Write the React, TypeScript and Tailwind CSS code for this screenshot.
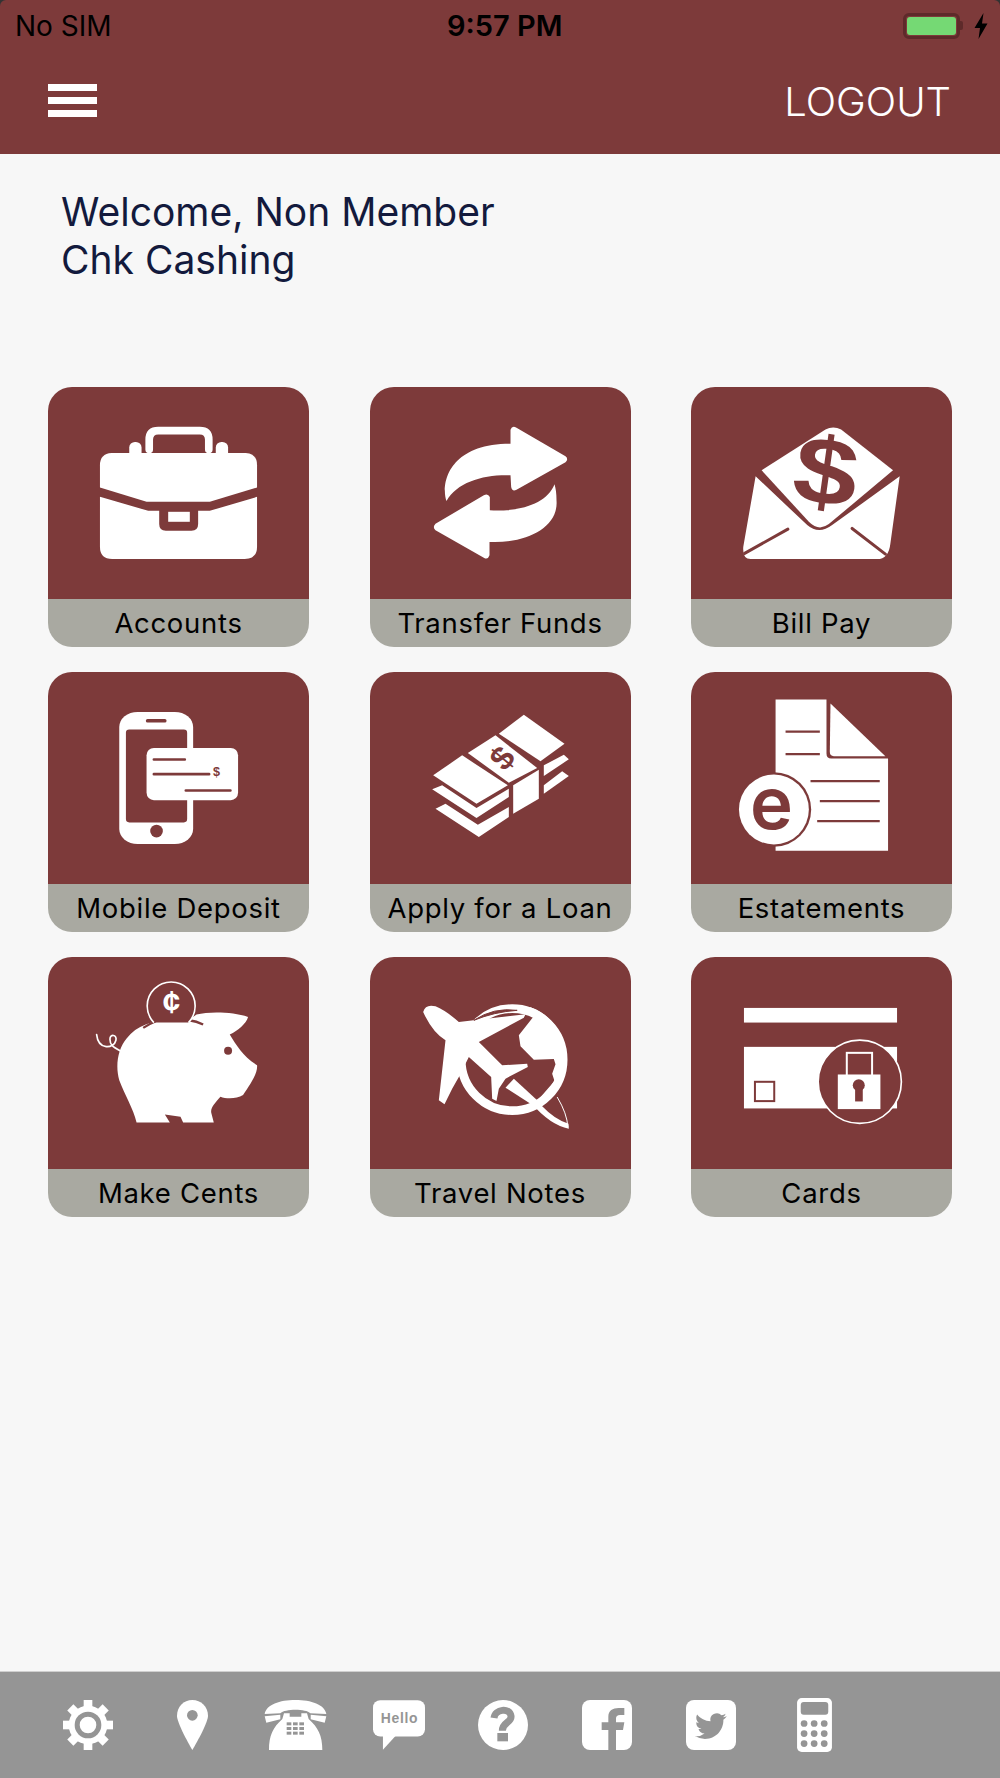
import type { ReactNode } from "react"

const MAROON = "#7d3a3a"
const GREY = "#959595"

function Briefcase() {
  return (
    <svg viewBox="55 50 782 637" className="w-full h-full" fill="#fff">
      <path d="M210 352L210 285Q210 250 245 248L648 248Q682 250 682 285L682 352L540 395L350 395Z" />
      <rect x="298" y="215" width="37" height="50" rx="17" />
      <rect x="558" y="215" width="37" height="50" rx="17" />
      <path d="M358 238L358 208Q358 181 385 181L510 181Q537 181 537 208L537 238" fill="none" stroke="#fff" strokeWidth="23" strokeLinecap="round" />
      <path d="M210 380L355 422L388 422L388 462Q388 482 408 482L485 482Q505 482 505 462L505 422L540 422L682 380L682 530Q682 567 645 567L247 567Q210 567 210 530Z" />
      <rect x="415" y="425" width="65" height="30" />
    </svg>
  )
}

function Transfer() {
  return (
    <svg viewBox="0 0 780 636" className="w-full h-full" fill="#fff">
      <path d="M420 170L420 128Q425 114 438 122L585 208Q595 216 585 226L438 308Q425 315 422 300L420 265C340 262 260 285 228 342C212 300 225 170 420 170Z" />
      <path d="M358 370L358 330Q352 318 340 325L195 410Q185 420 195 430L340 512Q352 520 357 505L357 465C470 470 565 420 558 340C558 320 556 305 552 292C530 350 450 375 358 370Z" />
    </svg>
  )
}

function BillPay() {
  return (
    <svg viewBox="572 50 782 637" className="w-full h-full" fill="#fff">
      <path d="M783 300L975 178Q998 165 1022 178L1178 300L985 462Q955 485 925 455Z" />
      <path d="M765 318L920 465Q955 495 995 465L1198 318L1170 520Q1165 567 1130 567L750 567Q725 567 728 530Z" />
      <path d="M862 477L732 550M1055 475L1155 552" stroke={MAROON} strokeWidth="9" strokeLinecap="round" />
      <text x="0" y="402" textAnchor="middle" fill={MAROON} fontSize="284" fontWeight="700" fontFamily="'Liberation Sans', sans-serif" transform="rotate(8 978 310) translate(976 0) scale(1.22 1)">$</text>
    </svg>
  )
}

function MobileDeposit() {
  return (
    <svg viewBox="55 35 782 637" className="w-full h-full">
      <rect x="268" y="155" width="222" height="397" rx="55" ry="45" fill="#fff" />
      <rect x="288" y="208" width="184" height="279" rx="10" fill={MAROON} />
      <rect x="348" y="176" width="62" height="11" rx="5" fill={MAROON} />
      <circle cx="380" cy="513" r="19" fill={MAROON} />
      <rect x="350" y="263" width="275" height="157" rx="22" fill="#fff" />
      <path d="M372 298H465M372 342H538M468 391H602" stroke={MAROON} strokeWidth="8" strokeLinecap="round" />
      <text x="560" y="348" textAnchor="middle" fill={MAROON} fontSize="38" fontWeight="700" fontFamily="'Liberation Sans', sans-serif">$</text>
    </svg>
  )
}

function Loan() {
  return (
    <svg viewBox="0 0 780 636" className="w-full h-full" fill="#fff">
      <path d="M385 185L460 128L582 215L510 268Z" />
      <path d="M292 243L375 190L500 288L415 332Z" />
      <path d="M188 310L275 250L412 340L318 395Z" />
      <path d="M185 352L215 340L318 408L415 350L415 375L318 438Z" />
      <path d="M195 410L225 395L322 458L415 405L415 435L325 495Z" />
      <path d="M428 340L505 293L505 380L428 425Z" />
      <path d="M520 280L580 248L595 262L520 312Z" />
      <path d="M520 340L575 298L595 312L520 365Z" />
      <text x="395" y="292" textAnchor="middle" fill={MAROON} fontSize="100" fontWeight="700" fontFamily="'Liberation Sans', sans-serif" transform="rotate(-50 395 258)">$</text>
    </svg>
  )
}

function Estatements() {
  return (
    <svg viewBox="572 35 782 637" className="w-full h-full">
      <path d="M825 118L978 118L978 280Q978 295 992 295L1163 295L1163 572L825 572Z" fill="#fff" />
      <path d="M990 130L1155 288L1000 288Q988 288 988 275Z" fill="#fff" />
      <path d="M855 214H958M855 282H958M930 363H1138M958 423H1138M950 483H1138" stroke={MAROON} strokeWidth="7" />
      <circle cx="820" cy="448" r="112" fill={MAROON} />
      <circle cx="820" cy="448" r="105" fill="#fff" />
      <text x="813" y="507" textAnchor="middle" fill={MAROON} fontSize="218" fontWeight="600" fontFamily="Inter, sans-serif">e</text>
    </svg>
  )
}

function Piggy() {
  return (
    <svg viewBox="55 35 782 637" className="w-full h-full" fill="#fff">
      <path d="M500 208C540 198 610 200 655 215C650 235 625 255 600 268C620 300 640 335 682 360C685 385 660 420 640 450C620 462 590 462 572 455C555 475 540 490 545 505L552 532L460 532L452 515L405 508L420 532L320 532C310 490 285 450 268 405C255 360 265 310 290 280C320 240 370 225 420 225C450 228 480 225 500 208Z" />
      <circle cx="595" cy="317" r="12" fill={MAROON} />
      <path d="M340 248Q358 236 378 228M478 225Q500 228 520 238" fill="none" stroke={MAROON} strokeWidth="7" />
      <path d="M370 232A72 72 0 1 1 478 232Z" fill={MAROON} />
      <path d="M372 232A72 72 0 1 1 476 232" fill="none" stroke="#fff" strokeWidth="5" />
      <text x="425" y="204" textAnchor="middle" fontSize="94" fontWeight="700" fontFamily="'Liberation Sans', sans-serif">¢</text>
      <path d="M272 318C250 305 240 300 240 282C240 265 262 268 258 285C252 312 205 315 200 268" fill="none" stroke="#fff" strokeWidth="5" strokeLinecap="round" />
    </svg>
  )
}

function Travel() {
  return (
    <svg viewBox="0 0 780 636" className="w-full h-full" fill="#fff">
      <circle cx="425" cy="308" r="153" fill="none" stroke="#fff" strokeWidth="26" />
      <path d="M478 150A165 165 0 0 1 510 445L500 432L552 372L545 350L555 322L550 306L490 308L450 268L445 235L488 180Z" />
      <path d="M158 165Q165 140 195 148Q225 160 265 195L465 172L460 182L325 255L395 325L470 320L472 330L405 365L385 395L378 432L365 425L362 360L295 300L265 360L245 395L222 442L205 430L225 250Q185 225 158 165Z" />
      <path d="M430 365L500 430L510 450L480 440L405 392Z" />
      <path d="M310 190Q370 150 440 160Q370 165 310 190Z" fill={MAROON} stroke={MAROON} strokeWidth="3" />
      <path d="M482 438L512 445Q555 490 594 500L595 515Q540 505 482 438Z" />
      <path d="M592 510Q590 470 560 420" fill="none" stroke="#fff" strokeWidth="3" />
    </svg>
  )
}

function Cards() {
  return (
    <svg viewBox="572 35 782 637" className="w-full h-full">
      <rect x="730" y="188" width="460" height="44" fill="#fff" />
      <rect x="730" y="305" width="460" height="185" fill="#fff" />
      <rect x="763" y="410" width="58" height="58" fill="none" stroke={MAROON} strokeWidth="6" />
      <circle cx="1078" cy="410" r="125" fill={MAROON} stroke="#fff" strokeWidth="5" />
      <rect x="1039" y="323" width="76" height="70" fill="none" stroke="#fff" strokeWidth="6" />
      <rect x="1012" y="388" width="128" height="104" fill="#fff" />
      <circle cx="1075" cy="420" r="18" fill={MAROON} />
      <rect x="1064" y="425" width="23" height="44" fill={MAROON} />
    </svg>
  )
}

function Gear() {
  return (
    <svg viewBox="70 118 150 150" className="w-[50px] h-[50px]" fill="#fff">
      {[0, 45, 90, 135, 180, 225, 270, 315].map((a) => (
        <rect key={a} x="132" y="118" width="26" height="34" transform={`rotate(${a} 145 193)`} />
      ))}
      <circle cx="145" cy="193" r="58" />
      <circle cx="145" cy="193" r="40" fill={GREY} />
      <circle cx="145" cy="193" r="25" />
    </svg>
  )
}

function Pin() {
  return (
    <svg viewBox="410 118 93 150" className="w-[31px] h-[50px]" fill="#fff">
      <path d="M456 118C430 118 410 138 410 165C410 185 440 240 456 268C472 240 503 185 503 165C503 138 482 118 456 118Z" />
      <circle cx="456" cy="164" r="16" fill={GREY} />
    </svg>
  )
}

function Telephone() {
  return (
    <svg viewBox="673 118 189 150" className="w-[63px] h-[50px]" fill="#fff">
      <path d="M675 160C680 132 720 118 767 118C815 118 855 132 860 160L812 158C800 144 735 144 722 158Z" />
      <path d="M675 167L722 162L722 176L680 186Z" />
      <path d="M860 167L813 162L813 176L855 186Z" />
      <path d="M733 158L750 158L750 168L785 168L785 158L802 158L807 175C835 200 848 225 848 268L688 268C688 225 700 200 728 175Z" />
      {[185, 199, 213].map((y) =>
        [741, 760, 779].map((x) => <rect key={`${x}-${y}`} x={x} y={y} width="14" height="9" fill={GREY} />),
      )}
    </svg>
  )
}

function HelloBubble() {
  return (
    <svg viewBox="1000 118 157 150" className="w-[52px] h-[50px]" fill="#fff">
      <rect x="1000" y="118" width="157" height="110" rx="22" />
      <path d="M1030 222L1030 268L1072 222Z" />
      <text x="1080" y="186" textAnchor="middle" fill={GREY} fontSize="42" letterSpacing="2" fontWeight="700" fontFamily="'Liberation Sans', sans-serif">Hello</text>
    </svg>
  )
}

function Help() {
  return (
    <svg viewBox="87 118 150 150" className="w-[50px] h-[50px]">
      <circle cx="162" cy="193" r="75" fill="#fff" />
      <path d="M135 172C138 145 182 140 186 166C189 186 160 184 160 210" fill="none" stroke={GREY} strokeWidth="21" />
      <rect x="145" y="217" width="32" height="25" fill={GREY} />
    </svg>
  )
}

function Facebook() {
  return (
    <svg viewBox="398 118 150 150" className="w-[50px] h-[50px]">
      <rect x="398" y="118" width="150" height="150" rx="24" fill="#fff" />
      <path d="M477 268L477 208L457 208L457 185L477 185L477 168C477 150 490 142 508 142L525 142L525 163L512 163C504 163 500 167 500 173L500 185L525 185L521 208L500 208L500 268Z" fill={GREY} />
    </svg>
  )
}

function Twitter() {
  return (
    <svg viewBox="710 118 150 150" className="w-[50px] h-[50px]">
      <rect x="710" y="118" width="150" height="150" rx="24" fill="#fff" />
      <path transform="translate(737 149) scale(3.95)" fill={GREY} d="M23.953 4.57a10 10 0 01-2.825.775 4.958 4.958 0 002.163-2.723c-.951.555-2.005.959-3.127 1.184a4.92 4.92 0 00-8.384 4.482C7.69 8.095 4.067 6.13 1.64 3.162a4.822 4.822 0 00-.666 2.475c0 1.71.87 3.213 2.188 4.096a4.904 4.904 0 01-2.228-.616v.06a4.923 4.923 0 003.946 4.827 4.996 4.996 0 01-2.212.085 4.936 4.936 0 004.604 3.417 9.867 9.867 0 01-6.102 2.105c-.39 0-.779-.023-1.17-.067a13.995 13.995 0 007.557 2.209c9.053 0 13.998-7.496 13.998-13.985 0-.21 0-.42-.015-.63A9.935 9.935 0 0024 4.59z" />
    </svg>
  )
}

function Calculator() {
  return (
    <svg viewBox="1044 112 104 161" className="w-[35px] h-[54px]">
      <rect x="1044" y="112" width="104" height="161" rx="14" fill="#fff" />
      <rect x="1055" y="124" width="82" height="38" rx="9" fill={GREY} />
      {[188, 218, 248].map((y) =>
        [1065, 1095, 1125].map((x) => <circle key={`${x}-${y}`} cx={x} cy={y} r="10" fill={GREY} />),
      )}
    </svg>
  )
}

function Tile({ label, children }: { label: string; children: ReactNode }) {
  return (
    <div className="h-[260px] rounded-[24px] overflow-hidden flex flex-col">
      <div className="h-[212px] bg-[#7d3a3a]">{children}</div>
      <div className="flex-1 bg-[#a9a9a1] pt-[2px] flex items-center justify-center text-[27.5px] tracking-[0.7px] text-black">
        {label}
      </div>
    </div>
  )
}

const tiles = [
  { label: "Accounts", icon: <Briefcase /> },
  { label: "Transfer Funds", icon: <Transfer /> },
  { label: "Bill Pay", icon: <BillPay /> },
  { label: "Mobile Deposit", icon: <MobileDeposit /> },
  { label: "Apply for a Loan", icon: <Loan /> },
  { label: "Estatements", icon: <Estatements /> },
  { label: "Make Cents", icon: <Piggy /> },
  { label: "Travel Notes", icon: <Travel /> },
  { label: "Cards", icon: <Cards /> },
]

export default function App() {
  return (
    <div className="w-[1000px] h-[1778px] flex flex-col bg-[#f7f7f7] font-['Inter',sans-serif]">
      <div className="bg-[#333]">
        <header className="h-[154px] bg-[#7d3a3a] rounded-t-[6px] flex flex-col">
          {/* status bar */}
          <div className="h-[50px] relative flex items-center justify-between pt-[1px] pl-[15px] pr-[12px] text-[28px] text-black">
            <span>No SIM</span>
            <span className="absolute left-[447px] top-[4px] text-[29px] font-semibold">9:57 PM</span>
            <div className="flex items-center">
              <div className="w-[57px] h-[26px] rounded-[6px] border-[3px] border-[#5e2a2a] p-[1px]">
                <div className="w-full h-full bg-[#75d974] rounded-[3px]" />
              </div>
              <div className="w-[3px] h-[9px] bg-[#5e2a2a] rounded-r-[2px] mr-[11px]" />
              <svg viewBox="0 0 14 26" className="w-[14px] h-[26px]" fill="#000">
                <path d="M9.5 0L0.5 15H6L4.5 26L13.5 10.5H8Z" />
              </svg>
            </div>
          </div>
          {/* nav */}
          <div className="flex-1 flex items-start justify-between pl-[48px] pr-[49px]">
            <div className="mt-[34px] w-[49px] flex flex-col gap-[6px]">
              <div className="h-[7px] bg-white" />
              <div className="h-[7px] bg-white" />
              <div className="h-[7px] bg-white" />
            </div>
            <span className="mt-[28px] text-[40px] leading-[48px] text-white font-light">LOGOUT</span>
          </div>
        </header>
      </div>

      <main className="flex-1 px-[48px]">
        <div className="pt-[34px] pl-[13px] text-[39px] leading-[48px] text-[#131a3d]">
          <div>Welcome, Non Member</div>
          <div>Chk Cashing</div>
        </div>
        <div className="mt-[103px] grid grid-cols-[261px_261px_261px] justify-between gap-y-[25px]">
          {tiles.map((t) => (
            <Tile key={t.label} label={t.label}>
              {t.icon}
            </Tile>
          ))}
        </div>
      </main>

      <footer className="h-[107px] bg-[#959595] border-t border-[#cfcfcf] flex items-center pl-[63px]">
        <Gear />
        <div className="ml-[64px]"><Pin /></div>
        <div className="ml-[56px]"><Telephone /></div>
        <div className="ml-[46px]"><HelloBubble /></div>
        <div className="ml-[53px]"><Help /></div>
        <div className="ml-[54px]"><Facebook /></div>
        <div className="ml-[54px]"><Twitter /></div>
        <div className="ml-[61px]"><Calculator /></div>
      </footer>
    </div>
  )
}
